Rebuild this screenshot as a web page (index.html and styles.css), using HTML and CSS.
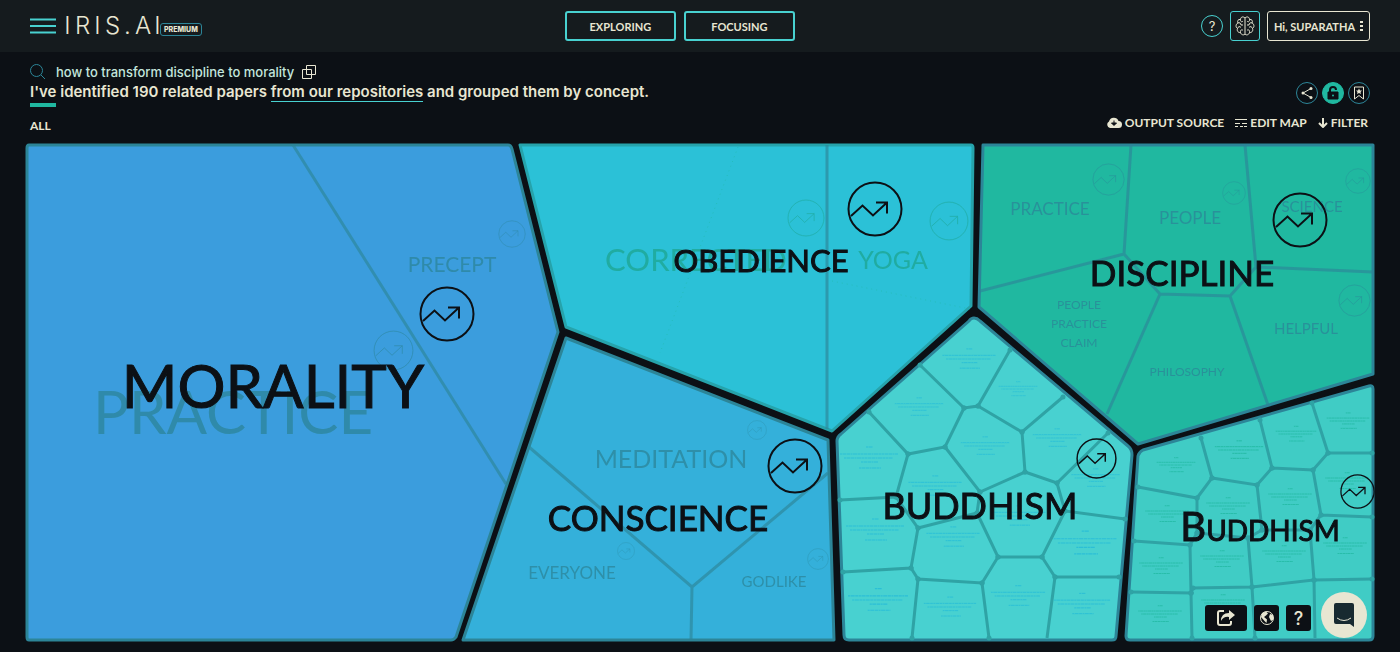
FILE: index.html
```html
<!DOCTYPE html>
<html lang="en">
<head>
<meta charset="utf-8">
<meta name="viewport" content="width=device-width, initial-scale=1">
<title>IRIS.AI</title>
<link rel="stylesheet" href="styles.css">
</head>
<body>
<header class="topbar">
  <div class="brand">
    <button class="menu" type="button" aria-label="Menu"><svg width="26" height="16" viewBox="0 0 26 16"><path d="M0 1.5H26M0 8H26M0 14.500H26"/></svg></button>
    <a class="logo" href="#"><span>I</span><span>R</span><span>I</span><span>S</span><span>.</span><span>A</span><span>I</span></a>
    <span class="badge">PREMIUM</span>
  </div>
  <nav class="modes">
    <button type="button">EXPLORING</button>
    <button type="button">FOCUSING</button>
  </nav>
  <div class="account">
    <button class="help" type="button">?</button>
    <button class="brain" type="button" aria-label="Brain"><svg width="20" height="20" viewBox="0 0 20 20"><path d="M10 1.500V18.500M10 2C8 0 5.500 1 5.500 3.500C3 3 2 5 3 7C.5 8 .5 11.500 2.500 12.500C1.500 15 3.500 17 5.500 16.500C6 19 9 19.500 10 18M10 2C12 0 14.500 1 14.500 3.500C17 3 18 5 17 7C19.500 8 19.500 11.500 17.500 12.500C18.500 15 16.500 17 14.500 16.500C14 19 11 19.500 10 18M5.500 3.500C5 5.500 7 6.500 8 5M3 7C4.500 6 6 7.500 6 9M2.500 12.500C3 10.500 5 10 6 11.500M5.500 16.500C5 14 7 13 8 14.500M6 9H8M14.500 3.500C15 5.500 13 6.500 12 5M17 7C15.500 6 14 7.500 14 9M17.500 12.500C17 10.500 15 10 14 11.500M14.500 16.500C15 14 13 13 12 14.500M14 9H12"/></svg></button>
    <button class="user" type="button">Hi, SUPARATHA <svg width="3" height="12" viewBox="0 0 3 12"><path d="M0 1h3v2H0zM0 5h3v2H0zM0 9h3v2H0z"/></svg></button>
  </div>
</header>

<main>
  <section class="summary">
    <div class="query">
      <svg class="search" width="16" height="16" viewBox="0 0 16 16"><circle cx="6.500" cy="6.500" r="6"/><path d="M11 11L15 15"/></svg>
      <span>how to transform discipline to morality</span>
      <button class="copy" type="button" aria-label="Copy"><svg width="16" height="16" viewBox="0 0 16 16"><path d="M5.500 1.500H14.500V10.500H5.500ZM1.500 5.500H10.500V14.500H1.500Z"/></svg></button>
    </div>
    <div class="row">
      <h1><span class="mark">I've</span> identified 190 related papers <a href="#">from our repositories</a> and grouped them by concept.</h1>
      <div class="actions">
        <button type="button" aria-label="Share"><svg width="14" height="14" viewBox="0 0 14 14"><path d="M11 2.500L3 7L11 11.500"/><circle class="dot" cx="11" cy="2.500" r="1.500"/><circle class="dot" cx="3" cy="7" r="1.500"/><circle class="dot" cx="11" cy="11.500" r="1.500"/></svg></button>
        <button class="on" type="button" aria-label="Unlocked"><svg width="14" height="14" viewBox="0 0 14 14"><path class="lock" d="M2 6H12V13H2Z"/><path class="shackle" d="M4 6V4Q4 1 7 1T10 4"/><circle class="hole" cx="7" cy="9.500" r="1"/></svg></button>
        <button type="button" aria-label="Bookmark"><svg width="14" height="14" viewBox="0 0 14 14"><path d="M2.500 1H11.500V13L7 9.500L2.500 13Z"/><path class="dot" d="M7 2.500L8 4.500H10L8.500 6L9 8L7 7L5 8L5.500 6L4 4.500H6Z"/></svg></button>
      </div>
    </div>
    <div class="row tools">
      <a class="all" href="#">ALL</a>
      <div class="links">
        <a href="#"><svg width="16" height="12" viewBox="0 0 16 12"><path class="solid" d="M4 11A3.500 3.500 0 0 1 3 4.500A5 5 0 0 1 12.500 4A3.500 3.500 0 0 1 12.500 11Z"/><path class="cut" d="M8 3.500V8M5.500 6H10.500L8 8.500Z"/></svg>OUTPUT SOURCE</a>
        <a href="#"><svg class="crisp" width="12" height="10" viewBox="0 0 12 10"><path d="M0 1.500H12M0 5.500H5M6.500 5.500H12M0 8.500H3M4.500 8.500H7.500M9 8.500H12"/></svg>EDIT MAP</a>
        <a href="#"><svg class="arrow" width="10" height="10" viewBox="0 0 10 10"><path d="M5 0V9M1 5L5 9L9 5"/></svg>FILTER</a>
      </div>
    </div>
  </section>

  <svg class="map" viewBox="25 143 1350 499" role="img" aria-label="Concept map">
    <defs>
      <symbol id="trend" viewBox="-28 -28 56 56"><circle r="26.500"/><path d="M-24 7L-12.500 -3.500L-2 6.500L12 -6.500M1 -6.500H12V4.500"/></symbol>
      <symbol id="paper" viewBox="0 0 60 24"><path stroke-dasharray="2 .5 4 .5 3 .5" d="M27 1H34M1 8H59M5 12H54M22 16H39M20 22H42"/></symbol>
      <marker id="joint" viewBox="-3 -3 6 6" markerWidth="6" markerHeight="6" markerUnits="userSpaceOnUse"><circle r="2.500"/></marker>
    </defs>

    <g class="region morality">
      <path class="area" d="M29 145H508Q511 145 512 149L558 332L456 637Q454 640 451 640H29Q27 640 27 637V148Q27 145 29 145Z"/>
      <path class="line" d="M293 145L506 484"/>
    </g>
    <g class="region obedience">
      <path class="area" d="M520 145H971Q973 145 973 148L971 306L832 431L566 327Z"/>
      <path class="line" d="M827 145V429"/>
      <path class="hair" d="M738 147L660 353M832 281L970 309"/>
    </g>
    <g class="region conscience">
      <path class="area" d="M566 338L828 440L834 640H463Z"/>
      <path class="line" d="M529 447L692 587L828 473M692 587L691 640"/>
    </g>
    <g class="region discipline">
      <path class="area" d="M983 145H1373V374L1138 444L979 307Z"/>
      <path class="line" d="M1131 145L1124 254L980 291M1124 254L1160 294L1230 296L1256 267L1245 145M1256 267L1373 272M1160 294L1107 414M1230 296L1268 405"/>
    </g>
    <g class="region papers">
      <path class="area" d="M974 318Q977 318 980 321L1128 446Q1132 449 1132 455L1116 636Q1116 640 1112 640H849Q844 640 844 635L837 441Q837 437 841 434L969 321Q971 318 974 318Z"/>
      <path class="line web" d="M920 365L964 408L978 406L1010 350M869 412L908 454L945 447L964 408M978 406L1022 432L1063 397M1022 432L1025 472L980 492L945 447M1025 472L1057 483L1108 433M908 454L896 497L840 500M896 497L918 528L977 513L980 492M1057 483L1065 511L1125 519M977 513L998 557L1042 557L1065 511M918 528L911 568L843 572M911 568L918 579L982 583L998 557M1042 557L1055 577L1119 577M918 579L912 638M982 583L989 638M1055 577L1047 638"/>
      <g class="notes">
        <use href="#paper" x="935" y="348" width="68" height="22"/><use href="#paper" x="990" y="381" width="56" height="16"/>
        <use href="#paper" x="886" y="397" width="66" height="20"/><use href="#paper" x="955" y="436" width="60" height="20"/>
        <use href="#paper" x="1022" y="428" width="70" height="20"/><use href="#paper" x="839" y="446" width="60" height="24"/>
        <use href="#paper" x="906" y="475" width="58" height="22"/><use href="#paper" x="1068" y="468" width="55" height="20"/>
        <use href="#paper" x="843" y="518" width="64" height="24"/><use href="#paper" x="920" y="526" width="66" height="22"/>
        <use href="#paper" x="1052" y="530" width="66" height="26"/><use href="#paper" x="988" y="505" width="62" height="22"/>
        <use href="#paper" x="847" y="585" width="62" height="30"/><use href="#paper" x="923" y="595" width="54" height="24"/>
        <use href="#paper" x="990" y="582" width="56" height="28"/><use href="#paper" x="1053" y="592" width="58" height="24"/>
      </g>
    </g>
    <g class="region papers mint">
      <path class="area" d="M1143 450L1369 386Q1373 385 1373 389V636Q1373 640 1369 640H1130Q1126 640 1126 636L1138 456Q1139 452 1143 450Z"/>
      <path class="line web" d="M1201 438L1212 478L1197 498L1138 487M1212 478L1257 485L1272 468L1260 420M1272 468L1313 470L1328 453L1312 403M1328 453L1372 453M1197 498L1197 533L1190 545L1134 541M1197 533L1248 538L1262 530L1257 485M1262 530L1310 530L1321 515L1313 470M1321 515L1372 517M1190 545L1191 593L1131 592M1191 593L1193 588L1252 587L1248 538M1252 587L1314 580L1310 530M1314 580L1372 579M1191 593L1192 638M1252 587L1255 638M1314 580L1315 638"/>
      <g class="notes">
        <use href="#paper" x="1150" y="457" width="52" height="16"/><use href="#paper" x="1213" y="440" width="52" height="20"/>
        <use href="#paper" x="1275" y="425" width="42" height="18"/><use href="#paper" x="1326" y="411" width="44" height="20"/>
        <use href="#paper" x="1141" y="505" width="52" height="18"/><use href="#paper" x="1203" y="497" width="50" height="18"/>
        <use href="#paper" x="1265" y="488" width="50" height="18"/><use href="#paper" x="1324" y="472" width="46" height="18"/>
        <use href="#paper" x="1138" y="557" width="46" height="18"/><use href="#paper" x="1197" y="550" width="50" height="18"/>
        <use href="#paper" x="1261" y="545" width="46" height="18"/><use href="#paper" x="1322" y="537" width="46" height="18"/>
        <use href="#paper" x="1135" y="605" width="50" height="18"/><use href="#paper" x="1197" y="594" width="52" height="18"/>
      </g>
    </g>

    <g class="ghost">
      <text class="f60" x="233" y="434">PRACTICE</text>
      <text class="f21" x="452" y="272">PRECEPT</text>
      <text class="f25" x="671" y="468">MEDITATION</text>
      <text class="f17" x="572" y="579">EVERYONE</text>
      <text class="f15" x="774" y="587">GODLIKE</text>
      <text class="f17" x="1050" y="215">PRACTICE</text>
      <text class="f17" x="1190" y="224">PEOPLE</text>
      <text class="f15" x="1312" y="212">SCIENCE</text>
      <text class="f12" x="1079" y="309">PEOPLE</text>
      <text class="f12" x="1079" y="328">PRACTICE</text>
      <text class="f12" x="1079" y="347">CLAIM</text>
      <text class="f12" x="1187" y="376">PHILOSOPHY</text>
      <text class="f15" x="1306" y="334">HELPFUL</text>
      <use href="#trend" x="373" y="330" width="41" height="41"/>
      <use href="#trend" x="498" y="220" width="28" height="28"/>
      <use href="#trend" x="747" y="420" width="20" height="20"/>
      <use href="#trend" x="617" y="542" width="18" height="18"/>
      <use href="#trend" x="807" y="548" width="22" height="22"/>
      <use href="#trend" x="1092" y="163" width="33" height="33"/>
      <use href="#trend" x="1222" y="181" width="24" height="24"/>
      <use href="#trend" x="1345" y="168" width="26" height="26"/>
      <use href="#trend" x="1338" y="284" width="33" height="33"/>
    </g>
    <g class="ghost green">
      <text class="f32" x="696" y="271">CORRECTED</text>
      <text class="f25" x="893" y="269">YOGA</text>
      <use href="#trend" x="787" y="199" width="38" height="38"/>
      <use href="#trend" x="929" y="201" width="40" height="40"/>
    </g>
    <g class="title">
      <text class="f60" x="273" y="408">MORALITY</text>
      <text class="f32" x="761" y="272">OBEDIENCE</text>
      <text class="f35" x="1182" y="286">DISCIPLINE</text>
      <text class="f35" x="658" y="531">CONSCIENCE</text>
      <text class="f37" x="980" y="519">BUDDHISM</text>
      <text class="f40" x="1260" y="541">B<tspan class="f28">UDDHISM</tspan></text>
      <use href="#trend" x="419" y="286" width="56" height="56"/>
      <use href="#trend" x="847" y="181" width="56" height="56"/>
      <use href="#trend" x="1272" y="192" width="56" height="56"/>
      <use href="#trend" x="767" y="438" width="56" height="56"/>
      <use href="#trend" x="1076" y="438" width="41" height="41"/>
      <use href="#trend" x="1340" y="474" width="35" height="35"/>
    </g>
  </svg>
</main>

<aside class="floating">
  <button class="wide" type="button" aria-label="Share map"><svg width="20" height="18" viewBox="0 0 20 18"><path d="M8 2H4Q2 2 2 4V14Q2 16 4 16H13Q15 16 15 14V12"/><path class="solid" d="M13 1L19 6L13 11V8Q8 7 5 12Q5 4 13 4Z"/></svg></button>
  <button type="button" aria-label="Language"><svg class="thin" width="16" height="16" viewBox="0 0 16 16"><circle cx="8" cy="8" r="6.500"/><path class="solid" d="M3 3L7 1.500L9 3.500L7 5.500L5 7L8 9.500L7.500 13L5.500 11L2 7ZM11 4L14 5V10L12 11L10 7Z"/></svg></button>
  <button type="button">?</button>
  <button class="chat" type="button" aria-label="Chat"><svg width="24" height="26" viewBox="0 0 24 26"><path class="bubble" d="M4 1H20Q22 1 22 3V25L18 22H4Q2 22 2 20V3Q2 1 4 1Z"/><path class="smile" d="M5 16Q12 21 19 16"/></svg></button>
</aside>
</body>
</html>
```
FILE: styles.css
```css
:root {
  --ink: #0c1015;
  --cream: #e8e6d2;
  --aqua: #48d1d0;
  --edge: #2c8598;
  --green: #20b8a0;
  --caps: Lato, "Liberation Sans", sans-serif;
}
* { box-sizing: border-box; }
body {
  margin: 0;
  background: var(--ink);
  color: var(--cream);
  font-family: Inter, "Liberation Sans", sans-serif;
}
button {
  display: flex;
  align-items: center;
  justify-content: center;
  padding: 0;
  border: 0;
  background: none;
  color: inherit;
  font: inherit;
}
a { color: inherit; text-decoration: none; }
svg { display: block; fill: none; stroke: currentColor; flex: none; }
.solid { fill: currentColor; }
.dot { fill: currentColor; stroke: none; }

.topbar {
  display: flex;
  align-items: center;
  justify-content: space-between;
  height: 52px;
  padding: 0 30px;
  background: #151b1e;
}
.brand, .modes, .account { display: flex; align-items: center; }
.menu { color: var(--aqua); }
.menu svg { stroke-width: 2; }
.logo {
  display: grid;
  grid-template-columns: repeat(7, 15px);
  margin-left: 4px;
  text-align: center;
  font-size: 24px;
  font-weight: 300;
  line-height: 28px;
}
.badge {
  padding: 0 3px;
  margin: 7px 0 0 -5px;
  border: 1px solid var(--edge);
  border-radius: 3px;
  font-size: 7px;
  font-weight: 800;
  line-height: 11px;
}
.modes { gap: 8px; margin-right: 43px; }
.modes button {
  width: 111px;
  height: 30px;
  border: 2px solid var(--aqua);
  border-radius: 3px;
  font-family: var(--caps);
  font-size: 11px;
  font-weight: 700;
}
.account { gap: 7px; }
.help {
  width: 22px;
  height: 22px;
  border: 1px solid var(--aqua);
  border-radius: 50%;
  font-size: 13px;
}
.brain {
  width: 30px;
  height: 30px;
  border: 1px solid var(--aqua);
  border-radius: 3px;
}
.user {
  gap: 5px;
  width: 103px;
  height: 30px;
  border: 1px solid var(--cream);
  border-radius: 3px;
  font-family: var(--caps);
  font-size: 11px;
  font-weight: 700;
  white-space: nowrap;
}
.user svg { fill: currentColor; stroke: none; }

main { padding: 12px 25px 10px; }
.summary { padding: 0 5px; }
.query {
  display: flex;
  align-items: center;
  height: 16px;
  color: #c3e6dd;
  font-size: 13px;
  font-weight: 500;
}
.search { margin-right: 10px; color: var(--edge); }
.copy { margin-left: 7px; color: var(--cream); }
.row { display: flex; justify-content: space-between; }
h1 { margin: 2px 0 0; font-size: 15px; font-weight: 600; line-height: 20px; }
h1 a { border-bottom: 1px solid var(--aqua); }
.mark { display: inline-block; height: 25px; border-bottom: 4px solid var(--green); }
.actions { display: flex; gap: 4px; height: 24px; padding-top: 2px; }
.actions button {
  width: 22px;
  height: 22px;
  border: 1px solid var(--edge);
  border-radius: 50%;
}
.actions .on { border-color: var(--green); background: var(--green); color: var(--ink); }
.lock { fill: currentColor; }
.shackle { stroke-width: 2; }
.hole { fill: var(--green); stroke: none; }
.tools { height: 36px; font-family: var(--caps); font-size: 12px; font-weight: 700; line-height: 16px; }
.all { padding-top: 11px; }
.links { display: flex; gap: 11px; padding: 8px 2px 0 0; }
.links a { display: flex; align-items: center; gap: 3px; height: 16px; }
.links .crisp { shape-rendering: crispEdges; }
.links .arrow { stroke-width: 2; }
.links .solid { stroke: none; }
.cut { fill: var(--ink); stroke: var(--ink); }

.map { width: 100%; height: auto; overflow: visible; }
.area { stroke: var(--edge); stroke-width: 3; stroke-linejoin: round; }
.line { stroke: var(--edge); stroke-opacity: .65; stroke-width: 3; }
.hair { stroke: var(--green); stroke-opacity: .5; stroke-dasharray: 1 4; }
.morality .area { fill: #3b9ddd; }
.obedience .area { fill: #2bc1d7; stroke: #26a3ab; }
.conscience .area { fill: #34b0da; }
.discipline .area { fill: #20b8a0; }
.papers .area { fill: #48d1d0; }
.mint .area { fill: #40ccc5; }
.region .web { marker-start: url(#joint); marker-mid: url(#joint); stroke: #2fa3a5; stroke-opacity: 1; }
#joint circle { fill: #2fa3a5; stroke: none; }
.notes { color: #2bbfd6; }
.mint .notes { color: #20b8a0; }
.map text { text-anchor: middle; stroke: none; fill: currentColor; font-family: var(--caps); }
.ghost { color: var(--edge); opacity: .75; }
.ghost text { font-weight: 400; }
.green { color: #1fa898; opacity: .85; }
.title { color: var(--ink); stroke-width: 2; }
.map .title text { font-weight: 400; stroke: currentColor; stroke-width: 1; }
.map .f12 { font-size: 12px; }
.map .f15 { font-size: 15px; }
.map .f17 { font-size: 17px; }
.map .f21 { font-size: 21px; }
.map .f25 { font-size: 25px; }
.map .f28 { font-size: 28px; }
.map .f32 { font-size: 31px; }
.map .f35 { font-size: 35px; }
.map .f37 { font-size: 36px; }
.map .f40 { font-size: 40px; }
.map .f60 { font-size: 60px; }

.floating {
  position: fixed;
  right: 33px;
  bottom: 14px;
  display: flex;
  align-items: center;
  gap: 7px;
}
.floating button {
  width: 25px;
  height: 26px;
  margin-top: 6px;
  border-radius: 3px;
  background: var(--ink);
  font-size: 18px;
  font-weight: 500;
}
.floating svg { stroke-width: 2; }
.floating .thin { stroke-width: 1; }
.floating .solid { stroke: none; }
.floating .wide { width: 42px; }
.floating .chat {
  width: 46px;
  height: 46px;
  margin: 0 0 0 3px;
  border-radius: 50%;
  background: var(--cream);
}
.bubble { fill: #182a30; stroke: none; }
.smile { stroke: var(--cream); stroke-width: 1; }
```
